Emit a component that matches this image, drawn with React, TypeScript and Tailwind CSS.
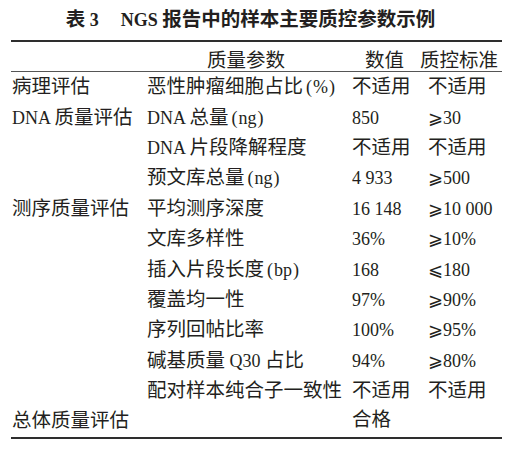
import React from "react";

type Row = {
  group?: string;
  param: string;
  value?: string;
  standard?: string;
};

const rows: Row[] = [
  { group: "病理评估", param: "恶性肿瘤细胞占比(%)", value: "不适用", standard: "不适用" },
  { group: "DNA 质量评估", param: "DNA 总量(ng)", value: "850", standard: "⩾30" },
  { param: "DNA 片段降解程度", value: "不适用", standard: "不适用" },
  { param: "预文库总量(ng)", value: "4 933", standard: "⩾500" },
  { group: "测序质量评估", param: "平均测序深度", value: "16 148", standard: "⩾10 000" },
  { param: "文库多样性", value: "36%", standard: "⩾10%" },
  { param: "插入片段长度(bp)", value: "168", standard: "⩽180" },
  { param: "覆盖均一性", value: "97%", standard: "⩾90%" },
  { param: "序列回帖比率", value: "100%", standard: "⩾95%" },
  { param: "碱基质量 Q30 占比", value: "94%", standard: "⩾80%" },
  { param: "配对样本纯合子一致性", value: "不适用", standard: "不适用" },
  { group: "总体质量评估", param: "", value: "合格", standard: "" },
];

const font = {
  fontFamily: '"Liberation Serif", "Noto Sans CJK SC", "DejaVu Serif", serif',
};

// CJK runs are set a touch larger than the Latin text, parens get a little air
function Mixed({ text }: { text?: string }) {
  if (!text) return null;
  const parts = text.split(/([\u4e00-\u9fff]+|[()])/).filter(Boolean);
  return (
    <>
      {parts.map((p, i) => {
        if (/[\u4e00-\u9fff]/.test(p))
          return (
            <span key={i} className="text-[19.5px]">
              {p}
            </span>
          );
        if (p === "(")
          return (
            <span key={i} className="ml-[3px] mr-[1px]">
              {p}
            </span>
          );
        if (p === ")")
          return (
            <span key={i} className="ml-[1px]">
              {p}
            </span>
          );
        return <span key={i}>{p}</span>;
      })}
    </>
  );
}

const cols = "grid grid-cols-[136px_205px_76px_74px]";

export default function App() {
  return (
    <div className="w-[511px] h-[449px] bg-white text-[#231f20]" style={font}>
      {/* Title */}
      <div className="pt-[8px] h-[40px] text-center text-[18px] font-bold leading-[24px] pr-[10px] whitespace-nowrap">
        <Mixed text="表 3" />
        <span className="ml-[22px]">
          <Mixed text="NGS 报告中的样本主要质控参数示例" />
        </span>
      </div>

      {/* Table */}
      <div className="ml-[11px] w-[491px] text-[18px]">
        <div className="border-t-2 border-[#2e2e2e]" />
        <div className={`${cols} h-[29px] items-center leading-[29px] pt-[4px] whitespace-nowrap`}>
          <div />
          <div className="pl-[60px]">
            <Mixed text="质量参数" />
          </div>
          <div className="pl-[13px]">
            <Mixed text="数值" />
          </div>
          <div className="-ml-[8px]">
            <Mixed text="质控标准" />
          </div>
        </div>
        <div className="border-t border-[#555]" />

        {rows.map((r, i) => (
          <div
            key={i}
            className={`${cols} h-[30.4px] items-center leading-[30px] whitespace-nowrap`}
          >
            <div className="pl-[1px]">
              <Mixed text={r.group} />
            </div>
            <div>
              <Mixed text={r.param} />
            </div>
            <div className={i === 11 ? "-mt-[2px]" : ""}>
              <Mixed text={r.value} />
            </div>
            <div>
              <Mixed text={r.standard} />
            </div>
          </div>
        ))}
        <div className="border-t-2 border-[#2e2e2e]" />
      </div>
    </div>
  );
}
